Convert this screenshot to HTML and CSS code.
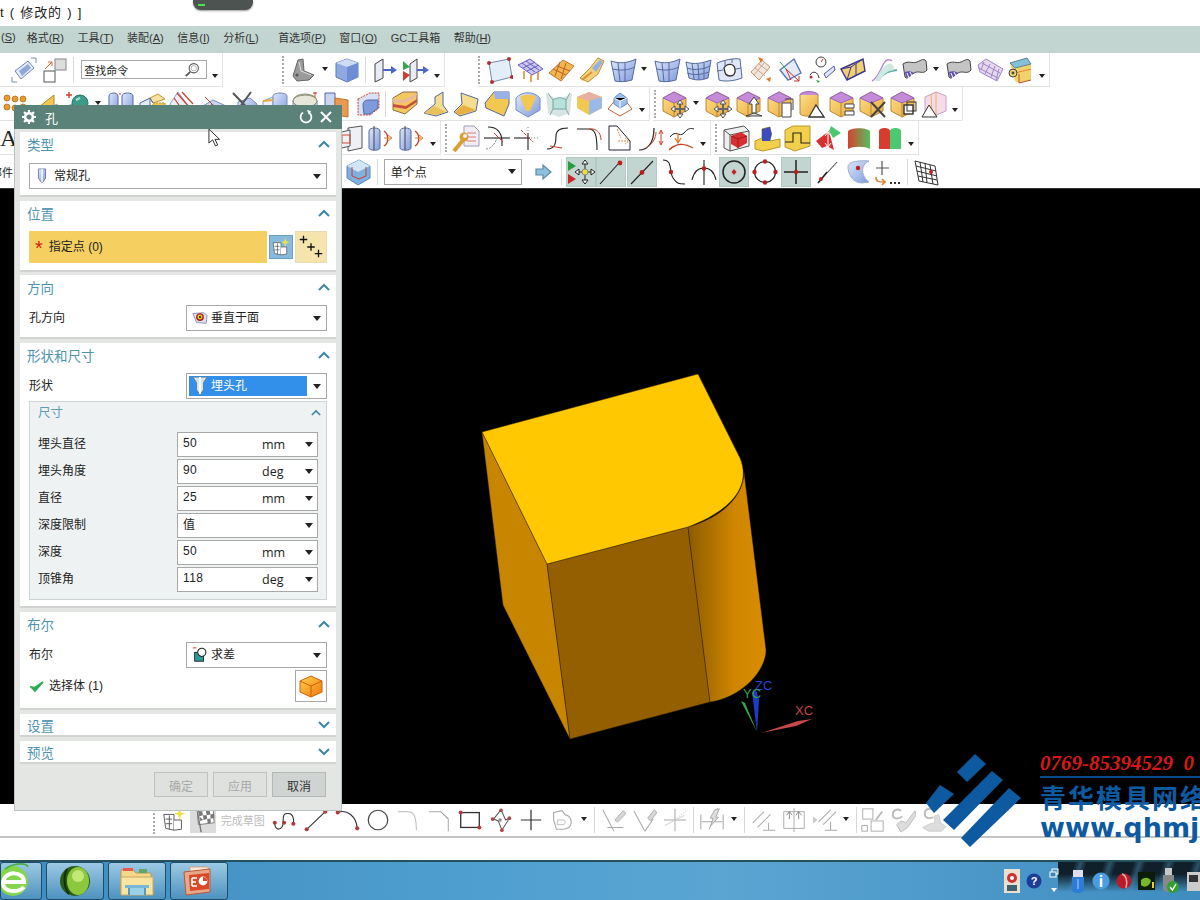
FILE: index.html
```html
<!DOCTYPE html>
<html lang="zh">
<head>
    <meta charset="UTF-8">
    <title>孔</title>
    <link rel="stylesheet" href="styles.css">
</head>
<body>
<svg class="defs" width="0" height="0">
    <defs>
        <linearGradient id="ye" x1="0" x2="1" y1="0" y2="1"><stop offset="0" stop-color="#fbe08a"/><stop offset="1" stop-color="#eda93c"/></linearGradient>
        <linearGradient id="bl" x1="0" x2="1" y1="0" y2="1"><stop offset="0" stop-color="#dfe8fb"/><stop offset="1" stop-color="#7f9bdc"/></linearGradient>
        <linearGradient id="rg" x1="0" x2="1"><stop offset="0" stop-color="#d8402c"/><stop offset="1" stop-color="#52c060"/></linearGradient>
        <linearGradient id="side" x1="0" x2="1"><stop offset="0" stop-color="#8c5c00"/><stop offset=".6" stop-color="#d08600"/><stop offset="1" stop-color="#d88c00"/></linearGradient>
        <linearGradient id="box" x1="0" x2="1" y1="0" y2="1"><stop offset="0" stop-color="#ffd24a"/><stop offset="1" stop-color="#f07810"/></linearGradient>

        <!-- row 1 -->
        <symbol id="rotview" viewBox="0 0 28 28"><path d="M5 15 18 5 24 12 11 23Z" fill="#e4eaf8" stroke="#6f86c0"/><path d="M9 15 18 8 21 12 12 20Z" fill="#8ea8dc"/><path d="M2 21v5h5M26 2h-5M26 2v5" stroke="#7d8cb4" fill="none"/></symbol>
        <symbol id="twosq" viewBox="0 0 28 28"><rect x="14" y="3" width="11" height="11" fill="#ddd" stroke="#888"/><rect x="3" y="15" width="11" height="11" fill="#fff" stroke="#555"/><path d="M4 13 11 6M11 6H7M11 6v4" stroke="#d9622c" fill="none"/></symbol>
        <symbol id="bracket" viewBox="0 0 28 28"><path d="M4 20 9 4 14 3 15 15 25 19 20 24 8 25Z" fill="#9b9b9b" stroke="#666"/><path d="M10 6 12 15 22 19" fill="none" stroke="#e0e0e0"/><circle cx="8" cy="19" r="1.6" fill="#555"/></symbol>
        <symbol id="cubeb" viewBox="0 0 28 28"><path d="M14 3 25 7V21L14 26 3 21V7Z" fill="#8ea9e2" stroke="#6378b4"/><path d="M3 7 14 11 25 7 14 3Z" fill="#cfdcf6"/><path d="M14 11V26L25 21V7Z" fill="#6f8dd2"/></symbol>
        <symbol id="extr" viewBox="0 0 28 28"><path d="M4 8 12 3V22L4 26Z" fill="#e8ecf4" stroke="#444"/><path d="M12 14H23" stroke="#4a66c8" stroke-width="2"/><path d="M20 10 26 14 20 18Z" fill="#4a66c8"/></symbol>
        <symbol id="extr2" viewBox="0 0 28 28"><path d="M8 8 15 3V22L8 26Z" fill="#e8ecf4" stroke="#444"/><path d="M1 5 8 11 1 14Z" fill="#3aa655"/><path d="M1 15 8 19 1 25Z" fill="#c9402e"/><path d="M15 14H24" stroke="#4a66c8" stroke-width="2"/><path d="M21 10 27 14 21 18Z" fill="#4a66c8"/></symbol>
        <symbol id="fourpt" viewBox="0 0 28 28"><path d="M4 7 24 3 27 21 7 26Z" fill="#e4eef8" stroke="#6f8ea8"/><g fill="#b03030"><circle cx="4" cy="7" r="2"/><circle cx="24" cy="3" r="2"/><circle cx="27" cy="21" r="2"/><circle cx="7" cy="26" r="2"/></g></symbol>
        <symbol id="gridar" viewBox="0 0 28 28"><path d="M2 9 14 3 27 13 16 19Z" fill="#c9c6f2" stroke="#6a5cc0"/><path d="M6 7 19 16M10 5 23 14M7 12 19 6M11 15 23 9" stroke="#6a5cc0" fill="none"/><path d="M8 15v8M15 19v7M22 16v8" stroke="#e0902c" stroke-width="1.6"/></symbol>
        <symbol id="meshor" viewBox="0 0 28 28"><path d="M2 17 16 4 27 10 14 25Z" fill="#f2b64e" stroke="#b77a28"/><path d="M6 13 19 19M10 10 23 15M13 6 8 20M19 7 14 23" stroke="#c15c2a" fill="none"/></symbol>
        <symbol id="sweep" viewBox="0 0 28 28"><path d="M2 22 12 12 20 2 26 5 20 18 10 26Z" fill="#f1d27a" stroke="#b59238"/><path d="M14 12 22 4 25 6 18 16Z" fill="#92b0e8"/><path d="M4 24 14 16" stroke="#e09030" stroke-width="2"/></symbol>
        <symbol id="surf3" viewBox="0 0 28 28"><path d="M2 5C10 8 19 7 27 3L23 24C16 26 10 26 6 25Z" fill="url(#bl)" stroke="#56699e"/><path d="M9 7 11 26M16 7 16 26M4 13C12 15 20 14 26 11" stroke="#56699e" fill="none"/></symbol>
        <symbol id="surf4" viewBox="0 0 28 28"><path d="M2 6C10 9 19 7 27 4L24 22C16 25 10 24 5 22Z" fill="url(#bl)" stroke="#56699e"/><path d="M8 7 10 23M14 8 15 24M20 7 20 23M3 12C11 15 20 13 26 10M3 17C11 20 20 18 25 16" stroke="#56699e" fill="none"/></symbol>
        <symbol id="surfhole" viewBox="0 0 28 28"><path d="M2 7C10 4 18 2 25 3L27 22C19 25 10 26 4 24Z" fill="#dfe6f8" stroke="#56699e"/><path d="M9 12C12 7 19 7 20 13 21 18 18 20 15 20 11 20 10 18 9 12Z" fill="#fff" stroke="#333" stroke-width="1.4"/><path d="M2 15 8 14M21 13 26 12M10 5V10M17 3V7" stroke="#56699e" fill="none"/></symbol>
        <symbol id="patchor" viewBox="0 0 28 28"><path d="M5 16 16 4 24 11 13 24Z" fill="#f0e6dc" stroke="#c89070"/><path d="M9 12 19 20M13 8 22 15M8 19 18 7" stroke="#c8a890" fill="none"/><path d="M12 1 17 3 15 7ZM20 23 25 21 24 26Z" fill="#e07828"/></symbol>
        <symbol id="frame" viewBox="0 0 28 28"><path d="M3 14 17 3 24 17 11 24Z" fill="#e4ebf8" stroke="#5a78b8" stroke-width="1.4"/><path d="M9 13 22 25M22 25H17M22 25V20M9 13 14 24" stroke="#c03428" fill="none"/><path d="M9 13 3 6" stroke="#3aa655"/></symbol>
        <symbol id="gauge" viewBox="0 0 28 28"><circle cx="13" cy="6" r="5" fill="#fff" stroke="#444"/><path d="M13 6 15 3" stroke="#c03428"/><path d="M16 18 26 10 27 14 18 22Z" fill="#dfe6f8" stroke="#5a58b0"/><path d="M2 19C5 14 10 16 11 22" fill="none" stroke="#333"/><circle cx="3" cy="21" r="1.5" fill="#b03030"/><path d="M8 24 12 25 10 27Z" fill="#3a9a55"/></symbol>
        <symbol id="wedge" viewBox="0 0 28 28"><path d="M2 13 24 3 26 15 8 24Z" fill="#f2ce74" stroke="#3b3890" stroke-width="1.4"/><path d="M2 13 12 11 24 3M12 11 8 24M17 8 17 19" stroke="#3b3890" fill="none"/></symbol>
        <symbol id="curves" viewBox="0 0 28 28"><path d="M2 25C8 22 10 14 14 7 16 3 20 3 22 5" fill="none" stroke="#b88ac8" stroke-width="1.5"/><path d="M8 24C14 16 20 15 27 14" fill="none" stroke="#5cb4a8" stroke-width="2"/><path d="M5 25C9 17 12 11 18 8 22 6 25 12 24 14 18 15 14 17 10 25Z" fill="#cfe8e4"/></symbol>
        <symbol id="cloth" viewBox="0 0 28 28"><path d="M2 8C8 4 11 8 16 6S22 2 25 5L26 14C22 19 18 14 13 17S7 24 4 21Z" fill="#c4c4c4" stroke="#444"/><path d="M5 21C9 22 11 18 13 17 10 15 7 15 4 16Z" fill="#5e52b4"/><path d="M6 17 8 22M9 16 11 20" stroke="#fff"/></symbol>
        <symbol id="pinkgrid" viewBox="0 0 28 28"><path d="M2 9 10 3 27 13 21 25 4 16Z" fill="#e8d8ee" stroke="#9a86c8"/><path d="M8 6 5 14M14 8 9 18M19 10 15 21M23 13 20 24M3 12 22 22M6 7 24 17" stroke="#9a86c8" fill="none"/></symbol>
        <symbol id="roll" viewBox="0 0 28 28"><path d="M3 7 20 2 24 8 24 24 12 27 8 25Z" fill="#f2d26a"/><path d="M3 7 20 2 24 8 8 12Z" fill="#86c0d4" stroke="#5a8498"/><path d="M8 17 24 13" stroke="#e8803c"/><path d="M12 18V27L24 24" stroke="#c04a30" fill="none"/><circle cx="6" cy="17" r="4" fill="#f2d26a" stroke="#444"/><circle cx="6" cy="17" r="1.4" fill="#444"/></symbol>

        <!-- row 2 -->
        <symbol id="dots" viewBox="0 0 28 28"><g fill="#e89a2c" stroke="#a86414" stroke-width=".7"><circle cx="6" cy="8" r="3"/><circle cx="14" cy="9" r="3"/><circle cx="22" cy="9" r="3"/><circle cx="6" cy="17" r="3"/><circle cx="14" cy="18" r="3"/><circle cx="22" cy="17" r="3"/></g></symbol>
        <symbol id="plane" viewBox="0 0 28 28"><path d="M3 20 22 5V19L7 26Z" fill="#f2c850" stroke="#b08828"/><path d="M14 20 25 14 27 24 16 26Z" fill="#d8e2f6" stroke="#8a9ccc"/></symbol>
        <symbol id="spherep" viewBox="0 0 28 28"><path d="M3 5H9M6 2V8" stroke="#c8402c" stroke-width="1.4"/><rect x="7" y="15" width="8" height="11" fill="#3d9c88" stroke="#276"/><circle cx="17" cy="13" r="8" fill="#3d9c88" stroke="#276"/><path d="M13 10 17 8" stroke="#a8e0d0" stroke-width="2"/></symbol>
        <symbol id="cyl2" viewBox="0 0 28 28"><path d="M2 6C2 2 11 2 11 6V24C11 27 2 27 2 24Z" fill="url(#bl)" stroke="#56699e"/><path d="M15 6C15 2 26 2 26 6V24C26 27 15 27 15 24Z" fill="url(#bl)" stroke="#56699e"/><path d="M12 4H14M12 25H14" stroke="#c8402c"/></symbol>
        <symbol id="boxy" viewBox="0 0 28 28"><path d="M2 13 12 8V25L2 26Z" fill="#e4ebf8" stroke="#56699e"/><path d="M12 8 20 4 27 9 15 13Z" fill="#f6e2a0" stroke="#c8922c"/><path d="M15 13H27V25H15Z" fill="#f2c850" stroke="#c8922c" stroke-dasharray="2 1"/><path d="M12 8 15 13" stroke="#56699e"/></symbol>
        <symbol id="redplate" viewBox="0 0 28 28"><path d="M2 14 10 2 26 24 8 26Z" fill="#eceef6" stroke="#8a9ccc"/><path d="M9 3 22 18M14 2 25 14M6 8 16 22" stroke="#c8402c" stroke-width="1.2"/></symbol>
        <symbol id="redplate2" viewBox="0 0 28 28"><path d="M2 17 14 10 27 16 15 25Z" fill="#c8d6f2" stroke="#7a8cbc"/><path d="M6 7 24 25" stroke="#c8402c"/><path d="M12 14 20 18" stroke="#c8402c"/></symbol>
        <symbol id="xblue" viewBox="0 0 28 28"><path d="M8 12 20 8 27 14V23L15 26 8 20Z" fill="url(#bl)" stroke="#7a8cbc"/><path d="M3 3 24 25M21 2 4 25" stroke="#555" stroke-width="2"/></symbol>
        <symbol id="cubecyl" viewBox="0 0 28 28"><path d="M2 11 12 7V23L2 26Z" fill="#eef0f6" stroke="#8a9ccc"/><path d="M12 6C12 2 26 2 26 6V22C26 26 12 26 12 22Z" fill="url(#bl)" stroke="#7a8cbc"/><path d="M12 10 2 11" stroke="#e8a83c" stroke-width="2"/></symbol>
        <symbol id="ellip" viewBox="0 0 28 28"><ellipse cx="14" cy="11" rx="12" ry="7" fill="#e8e4d0" stroke="#8a8a70"/><path d="M2 11V22H26V11" fill="#c8d6f2" stroke="#7a8cbc"/><ellipse cx="14" cy="11" rx="12" ry="6" fill="#e8e6d8" stroke="#8a8a70"/><path d="M24 2V7M22 3H26" stroke="#c8402c"/></symbol>
        <symbol id="foldor" viewBox="0 0 28 28"><path d="M3 3H13V24H3Z" fill="#c8d6f2" stroke="#56699e"/><path d="M13 8 26 10V27L13 25Z" fill="#e89a50" stroke="#c47428"/></symbol>
        <symbol id="dashbox" viewBox="0 0 28 28"><path d="M5 9 17 3H26V18L17 25H5Z" fill="#d8e2f6" stroke="#c8402c" stroke-dasharray="2 1"/><path d="M10 16C10 10 13 10 18 10H25V18L17 24H11Z" fill="#7f9bdc" stroke="#56699e"/></symbol>
        <symbol id="band" viewBox="0 0 28 28"><path d="M2 8 12 2H26V14L14 24 2 20Z" fill="#f4c860" stroke="#8a6c48"/><path d="M2 8C8 11 12 10 15 9 21 7 24 4 26 3 26 8 18 11 15 12 9 13 4 13 2 12Z" fill="#e8b8a0"/><path d="M2 14 15 16 26 9V12L15 19 2 17Z" fill="#c8503c"/></symbol>
        <symbol id="flap" viewBox="0 0 28 28"><path d="M2 23 13 14V7L21 2V15L26 22 14 26Z" fill="#f4dc90" stroke="#56699e"/><path d="M2 23 12 16 24 22 14 25Z" fill="#e8c05c"/></symbol>
        <symbol id="flap2" viewBox="0 0 28 28"><path d="M9 3 26 9 24 21 8 26 2 22 10 14Z" fill="#f4dc90" stroke="#56699e"/><path d="M3 22 11 15 24 20 8 25Z" fill="#e8b040"/></symbol>
        <symbol id="sheet" viewBox="0 0 28 28"><path d="M2 13 11 2H26V14L21 26 3 18Z" fill="#f2c850" stroke="#56699e"/><path d="M11 2H26V9H12Z" fill="#9ab0e6"/></symbol>
        <symbol id="cone" viewBox="0 0 28 28"><path d="M2 8C8 1 20 1 26 8V20L14 27 2 20Z" fill="url(#bl)" stroke="#7a8cbc"/><path d="M6 7C10 4 18 4 22 7L16 21H12Z" fill="#f2c850"/></symbol>
        <symbol id="fillet" viewBox="0 0 28 28"><path d="M1 3 13 10 27 3 25 23 14 27 3 23Z" fill="#d6e4e4"/><path d="M8 10C12 7 18 7 21 10V19H8Z" fill="#b8e0dc" stroke="#6ca8a4"/><path d="M3 3 8 10M25 3 21 10M8 19 5 25M21 19 24 25" stroke="#8aa4a4"/></symbol>
        <symbol id="chamf" viewBox="0 0 28 28"><path d="M2 7 14 2 27 7V18L14 25 2 18Z" fill="#f2c850"/><path d="M2 7 14 2 27 7 14 11Z" fill="#e8b0a0"/><path d="M14 11V25L27 18V7Z" fill="#9ab8e8"/></symbol>
        <symbol id="pyr" viewBox="0 0 28 28"><path d="M2 19 14 4 26 19 14 26Z" fill="#fff" stroke="#d0603c"/><path d="M14 3 21 8V14L14 18 8 14V8Z" fill="#9ac0ec" stroke="#6888c0"/><path d="M8 8 14 11 21 8M14 11V18" stroke="#fff"/></symbol>
        <symbol id="pbox" viewBox="0 0 28 28"><path d="M2 8 13 2 25 8V21L13 27 2 21Z" fill="url(#ye)" stroke="#b88838"/><path d="M2 8 13 2 25 8 13 13Z" fill="#c48cd8" stroke="#9a64b8"/><path d="M13 13V27" stroke="#b88838"/></symbol>
        <symbol id="pmove" viewBox="0 0 28 28"><use href="#pbox"/><path d="M19 11V27M11 19H27" stroke="#666" stroke-width="2"/><path d="M16 14 19 10 22 14ZM16 24 19 28 22 24ZM14 16 10 19 14 22ZM24 16 28 19 24 22Z" fill="#fff" stroke="#555"/></symbol>
        <symbol id="pup" viewBox="0 0 28 28"><use href="#pbox"/><path d="M19 7 14 14H17V23H21V14H24Z" fill="#fff" stroke="#444"/><path d="M11 26H27L19 23Z" fill="#ddd" stroke="#444"/></symbol>
        <symbol id="pdoc" viewBox="0 0 28 28"><use href="#pbox"/><path d="M16 13H25V27H16Z" fill="#fff" stroke="#444"/><path d="M19 9H27V20" fill="none" stroke="#444"/></symbol>
        <symbol id="pcyl" viewBox="0 0 28 28"><ellipse cx="12" cy="5" rx="9" ry="3.4" fill="#c48cd8" stroke="#9a64b8"/><path d="M3 5V24C6 27 18 27 21 24V5" fill="url(#ye)" stroke="#b88838"/><path d="M19 15 27 27H12Z" fill="#fff" stroke="#333" stroke-width="1.3"/></symbol>
        <symbol id="pswap" viewBox="0 0 28 28"><use href="#pbox"/><path d="M17 14H26V18H17ZM17 21H26V25H17Z" fill="#fff" stroke="#444"/></symbol>
        <symbol id="px" viewBox="0 0 28 28"><use href="#pbox"/><path d="M13 12 27 27M27 12 13 27" stroke="#444" stroke-width="2"/></symbol>
        <symbol id="psq" viewBox="0 0 28 28"><use href="#pbox"/><rect x="15" y="15" width="9" height="9" fill="#fff" stroke="#333" stroke-width="1.4"/><rect x="18" y="12" width="9" height="9" fill="none" stroke="#333"/></symbol>
        <symbol id="ptri" viewBox="0 0 28 28"><path d="M5 7 16 2 26 6V21L14 26 5 22Z" fill="#f4dce8" stroke="#c8a0c8"/><path d="M16 2V26M11 4 12 24" stroke="#f0b060"/><path d="M9 15 17 27H2Z" fill="#fff" stroke="#333"/></symbol>

        <!-- row 3 -->
        <symbol id="cubes2" viewBox="0 0 28 28"><path d="M12 4 26 2V24L12 27Z" fill="#eef0f6" stroke="#555"/><path d="M2 9 14 6V22L2 25Z" fill="#eef0f6" stroke="#555"/><rect x="6" y="11" width="8" height="8" fill="none" stroke="#c8502c"/></symbol>
        <symbol id="cylar" viewBox="0 0 28 28"><path d="M2 7C2 3 13 3 13 7V24C13 27 2 27 2 24Z" fill="url(#bl)" stroke="#56699e"/><path d="M7 2V26" stroke="#444"/><path d="M17 7C22 10 22 19 17 22" stroke="#c8402c" fill="none" stroke-width="1.4"/><path d="M17 14H24M21 11 25 14 21 17" stroke="#e08030" fill="none"/></symbol>
        <symbol id="wrench" viewBox="0 0 28 28"><path d="M12 2H22L27 7V22H12Z" fill="#f0eef4" stroke="#a098b8"/><path d="M15 9H24M15 13H24M15 17H24" stroke="#d88070"/><path d="M2 27 12 15" stroke="#d8a030" stroke-width="4"/><circle cx="12" cy="13" r="4.5" fill="#d8a030"/><circle cx="13" cy="12" r="2" fill="#f0eef4"/></symbol>
        <symbol id="cur1" viewBox="0 0 28 28"><path d="M1 14H27" stroke="#222" stroke-width="1.1"/><path d="M5 3C14 3 20 8 19 22" stroke="#222" fill="none" stroke-width="1.1"/><path d="M3 25C8 25 12 20 14 14" stroke="#888" fill="none" stroke-dasharray="2 1"/><path d="M11 9 20 18" stroke="#c8402c"/></symbol>
        <symbol id="cur2" viewBox="0 0 28 28"><path d="M1 14H17" stroke="#222" stroke-width="1.1"/><path d="M15 26V9" stroke="#222" stroke-width="1.1"/><path d="M8 6 20 18" stroke="#c8402c" stroke-dasharray="3 1"/><path d="M18 14H26M15 3V7" stroke="#888" stroke-dasharray="1 2"/></symbol>
        <symbol id="cur3" viewBox="0 0 28 28"><path d="M3 25C12 25 12 17 12 12S15 4 24 4" stroke="#222" fill="none" stroke-width="1.1"/><path d="M6 22 18 24" stroke="#c8402c" stroke-width="1.2"/></symbol>
        <symbol id="cur4" viewBox="0 0 28 28"><path d="M2 5H14C20 5 22 11 22 26" stroke="#222" fill="none" stroke-width="1.1"/><path d="M14 5H18C23 6 26 10 26 16" stroke="#c8402c" fill="none"/></symbol>
        <symbol id="docar" viewBox="0 0 28 28"><path d="M3 2H11L24 17V26H3Z" fill="#fff" stroke="#223"/><path d="M12 17H22M19 14 23 17 19 20M11 5 15 14" stroke="#d8904c" fill="none" stroke-dasharray="2 1"/></symbol>
        <symbol id="curar" viewBox="0 0 28 28"><path d="M2 26C10 26 17 20 17 4" stroke="#222" fill="none" stroke-width="1.2"/><path d="M9 24C15 21 19 14 19 8" stroke="#c8402c" fill="none"/><path d="M24 7V20M22 10 24 6 26 10M22 17 24 21 26 17" stroke="#c8402c" fill="none"/></symbol>
        <symbol id="curdown" viewBox="0 0 28 28"><path d="M3 13C9 5 12 14 17 9 21 4 24 4 27 5" stroke="#222" fill="none"/><path d="M2 26C9 19 18 19 26 24" stroke="#c8402c" fill="none" stroke-width="1.3"/><path d="M11 9V18M8 14 11 19 14 14" stroke="#e08030" fill="none" stroke-width="1.4"/></symbol>
        <symbol id="redcube" viewBox="0 0 28 28"><path d="M2 6 22 2 27 7V22L8 27 2 24Z" fill="#eee" stroke="#555"/><path d="M2 6 8 11 27 7M8 11V27" stroke="#555" fill="none"/><path d="M9 12 19 8 25 12V19L16 24 9 20Z" fill="#d83030"/><path d="M9 12 16 15 25 12M16 15V24" stroke="#a01818" fill="none"/></symbol>
        <symbol id="step1" viewBox="0 0 28 28"><path d="M2 17 9 14V5L17 3V17L27 15V23L10 27 2 25Z" fill="#f2d04c" stroke="#b89828"/><path d="M9 5 17 3 19 10 17 17 9 17Z" fill="#3c4cb8"/></symbol>
        <symbol id="step2" viewBox="0 0 28 28"><path d="M2 6 10 2H27V22L12 27 2 23Z" fill="#f2d04c" stroke="#b89828"/><path d="M2 18H10V9H18V19H27" fill="none" stroke="#222" stroke-width="1.1"/></symbol>
        <symbol id="grred" viewBox="0 0 28 28"><path d="M2 17 15 7 20 26 13 22 8 24Z" fill="#d83030"/><path d="M15 7 17 2 27 9 19 14Z" fill="#4cc870"/><path d="M14 9 14 22M11 12 14 8 17 12M11 19 14 23 17 19" stroke="#fff" fill="none"/></symbol>
        <symbol id="rggrad" viewBox="0 0 28 28"><path d="M3 8C3 3 25 3 25 8V25C20 22 8 22 3 25Z" fill="url(#rg)"/></symbol>
        <symbol id="rgsplit" viewBox="0 0 28 28"><path d="M3 7C3 3 14 3 14 7V25H3Z" fill="#d83c30"/><path d="M14 7C14 3 25 3 25 7V25H14Z" fill="#4cc870"/></symbol>

        <!-- row 4 -->
        <symbol id="cubered" viewBox="0 0 28 28"><path d="M3 8 15 2 26 8V20L14 27 3 20Z" fill="#7fb0e0" stroke="#5c88b8"/><path d="M3 8 15 2 26 8 14 14Z" fill="#cfe6f6"/><path d="M8 9V18L15 21 22 18V9" fill="none" stroke="#c8402c"/></symbol>
        <symbol id="nextar" viewBox="0 0 28 28"><path d="M7 11H14V7L22 14 14 21V17H7Z" fill="#8ec0dc" stroke="#5c8ca4" stroke-width="1.2"/></symbol>
        <symbol id="snapall" viewBox="0 0 28 28"><path d="M1 3 9 8 1 13Z" fill="#2a9c40"/><path d="M1 16 9 21 1 26Z" fill="#c82828"/><path d="M18 2 21 6H15ZM18 26 21 22H15ZM8 14 12 11V17ZM28 14 24 11V17Z" fill="#fff" stroke="#222"/><path d="M18 6V22M12 14H24" stroke="#222"/><circle cx="18" cy="14" r="3" fill="#f0e030" stroke="#888"/></symbol>
        <symbol id="snapend" viewBox="0 0 28 28"><path d="M3 26 22 5" stroke="#222" stroke-width="1.1"/><circle cx="23" cy="5" r="2.4" fill="#b82020"/></symbol>
        <symbol id="snapmid" viewBox="0 0 28 28"><path d="M3 26 25 3" stroke="#222" stroke-width="1.1"/><circle cx="14" cy="14.5" r="2.4" fill="#b82020"/></symbol>
        <symbol id="snapctl" viewBox="0 0 28 28"><path d="M4 2C14 2 10 14 14 20S20 26 26 26" stroke="#222" fill="none" stroke-width="1.1"/><circle cx="12" cy="14" r="2.2" fill="#b82020"/></symbol>
        <symbol id="snapint" viewBox="0 0 28 28"><path d="M14 2V27" stroke="#222" stroke-width="1.1"/><path d="M2 22C4 13 9 10 14 10S24 13 26 22" stroke="#222" fill="none" stroke-width="1.1"/><circle cx="14" cy="10.5" r="2.2" fill="#b82020"/></symbol>
        <symbol id="snapcen" viewBox="0 0 28 28"><circle cx="14" cy="14" r="11" fill="none" stroke="#222" stroke-width="1.5"/><path d="M14 11 16.5 14 14 17 11.5 14Z" fill="#c82020"/></symbol>
        <symbol id="snapqua" viewBox="0 0 28 28"><circle cx="14" cy="14" r="10.5" fill="none" stroke="#222" stroke-width="1.2"/><g fill="#b82020"><circle cx="14" cy="3.5" r="2.2"/><circle cx="14" cy="24.5" r="2.2"/><circle cx="3.5" cy="14" r="2.2"/><circle cx="24.5" cy="14" r="2.2"/></g></symbol>
        <symbol id="snapcross" viewBox="0 0 28 28"><path d="M14 2V26M2 14H26" stroke="#222" stroke-width="1.5"/><circle cx="14" cy="14" r="2.2" fill="#b82020"/></symbol>
        <symbol id="snapline" viewBox="0 0 28 28"><path d="M5 25 24 4" stroke="#555" stroke-width="1.1"/><path d="M5 25 14 14" stroke="#222" stroke-width="1.3"/><circle cx="8" cy="21" r="2" fill="#b82020"/></symbol>
        <symbol id="snapface" viewBox="0 0 28 28"><path d="M4 9C4 5 10 2 25 3 16 7 17 18 25 24L18 25C8 25 4 15 4 9Z" fill="url(#bl)" stroke="#98acd0"/><circle cx="14" cy="10" r="2.2" fill="#b82020"/></symbol>
        <symbol id="snapmore" viewBox="0 0 28 28"><path d="M8 3V17M2 10H15" stroke="#555" stroke-width="1.2"/><path d="M2 19C2 24 5 24 10 24M8 21 11 24 8 27" stroke="#e08030" fill="none" stroke-width="1.6"/><path d="M16 25H18M20 25H22M24 25H26" stroke="#333" stroke-width="2"/></symbol>
        <symbol id="wgrid" viewBox="0 0 28 28"><path d="M3 3 23 8 26 27 7 23Z" fill="#fff" stroke="#333"/><path d="M8 4 11 24M13 5 15 25M18 7 21 26M4 8 24 13M5 13 25 18M6 18 25 22" stroke="#333" fill="none"/><circle cx="19" cy="14" r="2" fill="#c82020"/></symbol>

        <!-- sketch bar -->
        <symbol id="sknew" viewBox="0 0 28 28"><path d="M3 8H14V25L5 23Z" fill="#fff" stroke="#555"/><path d="M5 13H12M5 18H12M9 9V24" stroke="#555"/><path d="M20 1 21.5 6 26 7 21.5 9 20 14 18.5 9 14 7 18.5 6Z" fill="#f0e048"/><path d="M14 14H22V24L14 25" fill="#fff" stroke="#555"/></symbol>
        <symbol id="skflag" viewBox="0 0 28 28"><path d="M8 5 25 2 26 17 9 19Z" fill="#fff" stroke="#777"/><path d="M9 5 13 4.5 14 9 10 10ZM17 4 21 3 22 8 18 9ZM14 9 18 9 18.5 13 14.5 14ZM22 8 26 7 26 12 22 12.5ZM10 10 14 14 11 15ZM18.5 13 22 12.5 22.5 17 19 17.5Z" fill="#777"/><path d="M8 5 12 27" stroke="#777" stroke-width="1.5"/></symbol>
        <symbol id="skspline" viewBox="0 0 28 28"><path d="M3 18C3 26 12 26 12 16S14 7 18 7 24 12 23 18" fill="none" stroke="#333" stroke-width="1.2"/><g fill="#b03a3a"><circle cx="3" cy="17" r="2.2"/><circle cx="13" cy="17" r="2.2"/><circle cx="23" cy="18" r="2.2"/></g></symbol>
        <symbol id="skline" viewBox="0 0 28 28"><path d="M4 24 24 5" stroke="#333" stroke-width="1.2"/><circle cx="4" cy="24" r="2.2" fill="#b03a3a"/><circle cx="24" cy="5" r="2.2" fill="#b03a3a"/></symbol>
        <symbol id="skarc" viewBox="0 0 28 28"><path d="M4 6C14 2 24 10 25 23" fill="none" stroke="#333" stroke-width="1.2"/><circle cx="4" cy="6" r="2.2" fill="#b03a3a"/><circle cx="25" cy="23" r="2.2" fill="#b03a3a"/></symbol>
        <symbol id="skcirc" viewBox="0 0 28 28"><circle cx="14" cy="14" r="10.5" fill="none" stroke="#444" stroke-width="1.3"/></symbol>
        <symbol id="skfil" viewBox="0 0 28 28"><path d="M3 5H14C20 5 23 10 23 25" fill="none" stroke="#bbb" stroke-width="1.1"/></symbol>
        <symbol id="skcham" viewBox="0 0 28 28"><path d="M3 5H16L24 13V26" fill="none" stroke="#aaa" stroke-width="1.1"/><path d="M16 5 24 13" stroke="#888" stroke-dasharray="1 1"/></symbol>
        <symbol id="skrect" viewBox="0 0 28 28"><rect x="4" y="6" width="20" height="16" fill="none" stroke="#333" stroke-width="1.4"/><circle cx="4" cy="6" r="2.2" fill="#b03a3a"/><circle cx="24" cy="22" r="2.2" fill="#b03a3a"/></symbol>
        <symbol id="skpoly" viewBox="0 0 28 28"><path d="M6 13 14 3 19 14 23 12 15 25 11 15Z" fill="none" stroke="#555" stroke-width="1.1"/><g fill="#a84848"><circle cx="14" cy="3.5" r="2"/><circle cx="5" cy="13" r="2"/><circle cx="23" cy="12" r="2"/><circle cx="15" cy="25" r="2"/></g><circle cx="13" cy="14" r="1.8" fill="#888"/></symbol>
        <symbol id="skplus" viewBox="0 0 28 28"><path d="M14 3V25M3 14H25" stroke="#333" stroke-width="1.3"/></symbol>
        <symbol id="skprof" viewBox="0 0 28 28"><path d="M5 6 14 4 18 9C20 8 24 12 24 16 24 22 20 24 14 24H8L5 14Z" fill="none" stroke="#aaa" stroke-width="1.2"/><path d="M9 14H15C18 14 19 18 15 19H9Z" fill="none" stroke="#bbb"/></symbol>
        <symbol id="gtrim" viewBox="0 0 28 28"><path d="M3 3 15 26M8 22H25" stroke="#aaa" stroke-width="1.1"/><path d="M16 14 25 4 28 7 19 16Z" fill="#d8d8d8" stroke="#aaa"/></symbol>
        <symbol id="gtrim2" viewBox="0 0 28 28"><path d="M3 4 15 26M15 26 24 13" stroke="#aaa" stroke-width="1.1"/><path d="M18 12 25 3 28 6 21 15Z" fill="#d8d8d8" stroke="#aaa"/></symbol>
        <symbol id="gcross" viewBox="0 0 28 28"><path d="M14 2V26M2 14H26" stroke="#aaa" stroke-width="1.1"/><path d="M16 12 26 4" stroke="#bbb" stroke-dasharray="1 2"/><path d="M3 20 24 9" stroke="#ccc"/></symbol>
        <symbol id="gdim" viewBox="0 0 28 28"><path d="M2 8V24M26 8V24M3 16H25M20 1 11 24" stroke="#aaa" fill="none" stroke-width="1.1"/><path d="M17 3 22 2 18 11 21 11 13 20 15 12 12 12Z" fill="#ddd" stroke="#aaa"/></symbol>
        <symbol id="gpara" viewBox="0 0 28 28"><path d="M3 17 15 5M8 22 22 8M14 25H27M20 17V25" stroke="#aaa" fill="none" stroke-width="1.1"/></symbol>
        <symbol id="gsym" viewBox="0 0 28 28"><rect x="3" y="5" width="22" height="18" fill="none" stroke="#aaa"/><path d="M14 1V27" stroke="#aaa"/><path d="M9 13V5M6 9 9 5 12 9M19 13V5M16 9 19 5 22 9" stroke="#888" fill="none"/></symbol>
        <symbol id="gperp" viewBox="0 0 28 28"><path d="M1 10 6 14 1 18Z" fill="#ccc"/><path d="M7 16 20 3M12 19 26 5M14 25H27M20 16V25" stroke="#aaa" fill="none" stroke-width="1.1"/></symbol>
        <symbol id="gshow" viewBox="0 0 28 28"><rect x="4" y="2" width="11" height="11" fill="#fff" stroke="#aaa"/><rect x="13" y="15" width="13" height="11" fill="#fff" stroke="#aaa"/><rect x="3" y="20" width="6" height="6" fill="#fff" stroke="#aaa"/><path d="M18 14 25 5" stroke="#bbb" stroke-width="2"/></symbol>
        <symbol id="gcap1" viewBox="0 0 28 28"><path d="M12 4C7 1 3 4 3 8 3 14 10 13 13 10" fill="none" stroke="#bbb" stroke-width="2"/><path d="M7 19 12 15 17 17 27 4 28 9 19 22 12 27Z" fill="#ddd" stroke="#bbb"/></symbol>
        <symbol id="gcap2" viewBox="0 0 28 28"><path d="M12 3C7 0 4 4 4 7 4 12 9 13 13 11" fill="none" stroke="#bbb" stroke-width="2"/><path d="M14 10 19 8 21 17 27 21 22 26H8L2 22 10 18 15 17Z" fill="#ddd" stroke="#ccc"/></symbol>

        <!-- small inline icons -->
        <symbol id="holeg" viewBox="0 0 14 22"><path d="M2 1H12V14L7 21 2 14Z" fill="url(#bl)" stroke="#4c5c84"/><path d="M7 1V20" stroke="#fff" stroke-width="2"/></symbol>
        <symbol id="csk" viewBox="0 0 18 22"><path d="M1 1H17L13 7V15L9 21 5 15V7Z" fill="#d4e4ec" stroke="#607888"/><path d="M9 1V20" stroke="#fff" stroke-width="2"/></symbol>
    </defs>
</svg>

<div class="screen">
    <div class="titlebar">t ( 修改的 ) ]</div>
    <div class="menubar">
        <span class="mi first">(<u>S</u>)</span>
        <span class="mi">格式(<u>R</u>)</span>
        <span class="mi">工具(<u>T</u>)</span>
        <span class="mi">装配(<u>A</u>)</span>
        <span class="mi">信息(<u>I</u>)</span>
        <span class="mi">分析(<u>L</u>)</span>
        <span class="mi wide">首选项(<u>P</u>)</span>
        <span class="mi">窗口(<u>O</u>)</span>
        <span class="mi">GC工具箱</span>
        <span class="mi">帮助(<u>H</u>)</span>
    </div>

    <div class="toolrow">
        <div class="tgroup g-view">
            <svg class="ic"><use href="#rotview"/></svg><svg class="ic"><use href="#twosq"/></svg>
            <i class="sep"></i>
            <div class="findbox"><span>查找命令</span>
                <svg class="findicon" viewBox="0 0 18 18"><circle cx="11" cy="7" r="5.2" fill="#fff" stroke="#555" stroke-width="1.2"/><circle cx="11" cy="7" r="3" fill="none" stroke="#aaa"/><path d="M7 11 2 16" stroke="#555" stroke-width="2"/></svg>
            </div>
            <i class="dd end"></i>
        </div>
        <div class="tgroup g-feat">
            <i class="grip"></i>
            <svg class="ic"><use href="#bracket"/></svg><i class="dd"></i><svg class="ic"><use href="#cubeb"/></svg>
            <i class="sep"></i>
            <svg class="ic"><use href="#extr"/></svg><svg class="ic"><use href="#extr2"/></svg><i class="dd end"></i>
        </div>
        <div class="tgroup g-surf">
            <i class="grip"></i>
            <svg class="ic"><use href="#fourpt"/></svg><svg class="ic"><use href="#gridar"/></svg><svg class="ic"><use href="#meshor"/></svg><svg class="ic"><use href="#sweep"/></svg><svg class="ic"><use href="#surf3"/></svg><i class="dd"></i><svg class="ic"><use href="#surf3"/></svg><svg class="ic"><use href="#surf4"/></svg><svg class="ic"><use href="#surfhole"/></svg><svg class="ic"><use href="#patchor"/></svg><svg class="ic"><use href="#frame"/></svg><svg class="ic"><use href="#gauge"/></svg><svg class="ic"><use href="#wedge"/></svg><svg class="ic"><use href="#curves"/></svg><svg class="ic"><use href="#cloth"/></svg><i class="dd"></i><svg class="ic"><use href="#cloth"/></svg><svg class="ic"><use href="#pinkgrid"/></svg><svg class="ic"><use href="#roll"/></svg><i class="dd end"></i>
        </div>
    </div>

    <div class="toolrow">
        <div class="tgroup">
            <svg class="ic"><use href="#dots"/></svg><svg class="ic"><use href="#plane"/></svg><svg class="ic"><use href="#spherep"/></svg><i class="dd"></i><svg class="ic"><use href="#cyl2"/></svg><svg class="ic"><use href="#boxy"/></svg><svg class="ic"><use href="#redplate"/></svg><svg class="ic"><use href="#redplate2"/></svg><svg class="ic"><use href="#xblue"/></svg><svg class="ic"><use href="#cubecyl"/></svg><svg class="ic"><use href="#ellip"/></svg><svg class="ic"><use href="#foldor"/></svg><svg class="ic"><use href="#dashbox"/></svg>
            <i class="sep"></i>
            <svg class="ic"><use href="#band"/></svg><svg class="ic"><use href="#flap"/></svg><svg class="ic"><use href="#flap2"/></svg><svg class="ic"><use href="#sheet"/></svg><svg class="ic"><use href="#cone"/></svg><svg class="ic"><use href="#fillet"/></svg><svg class="ic"><use href="#chamf"/></svg><svg class="ic"><use href="#pyr"/></svg><i class="dd end"></i>
        </div>
        <div class="tgroup g-near">
            <i class="grip"></i>
            <svg class="ic"><use href="#pmove"/></svg><i class="dd"></i><svg class="ic"><use href="#pmove"/></svg><svg class="ic"><use href="#pup"/></svg><svg class="ic"><use href="#pdoc"/></svg><svg class="ic"><use href="#pcyl"/></svg><svg class="ic"><use href="#pswap"/></svg><svg class="ic"><use href="#px"/></svg><svg class="ic"><use href="#psq"/></svg><svg class="ic"><use href="#ptri"/></svg><i class="dd end"></i>
        </div>
    </div>

    <div class="toolrow">
        <div class="tgroup">
            <span class="bigA">A</span>
            <svg class="ic"><use href="#cubes2"/></svg><svg class="ic"><use href="#cylar"/></svg><svg class="ic"><use href="#cylar"/></svg><i class="dd end"></i>
        </div>
        <div class="tgroup g-near">
            <i class="grip"></i>
            <svg class="ic"><use href="#wrench"/></svg><svg class="ic"><use href="#cur1"/></svg><svg class="ic"><use href="#cur2"/></svg><svg class="ic"><use href="#cur3"/></svg><svg class="ic"><use href="#cur4"/></svg><svg class="ic"><use href="#docar"/></svg><svg class="ic"><use href="#curar"/></svg><svg class="ic"><use href="#curdown"/></svg><i class="dd end"></i>
        </div>
        <div class="tgroup g-near">
            <i class="grip"></i>
            <svg class="ic"><use href="#redcube"/></svg><svg class="ic"><use href="#step1"/></svg><svg class="ic"><use href="#step2"/></svg><svg class="ic"><use href="#grred"/></svg><svg class="ic"><use href="#rggrad"/></svg><svg class="ic"><use href="#rgsplit"/></svg><i class="dd end"></i>
        </div>
    </div>

    <div class="toolrow last">
        <span class="cutlabel">部件</span>
        <svg class="ic"><use href="#cubered"/></svg>
        <i class="sep"></i>
        <div class="combo pointcombo"><span>单个点</span><i class="arrow"></i></div>
        <svg class="ic nextbtn"><use href="#nextar"/></svg>
        <i class="sep"></i>
        <svg class="ic on"><use href="#snapall"/></svg><svg class="ic on"><use href="#snapend"/></svg><svg class="ic on"><use href="#snapmid"/></svg><svg class="ic"><use href="#snapctl"/></svg><svg class="ic"><use href="#snapint"/></svg><svg class="ic on"><use href="#snapcen"/></svg><svg class="ic"><use href="#snapqua"/></svg><svg class="ic on"><use href="#snapcross"/></svg><svg class="ic"><use href="#snapline"/></svg><svg class="ic"><use href="#snapface"/></svg><svg class="ic"><use href="#snapmore"/></svg>
        <i class="sep"></i>
        <svg class="ic"><use href="#wgrid"/></svg>
    </div>

    <div class="viewport">
        <svg class="model" viewBox="0 188 1200 616">
            <path d="M482 432 503 605 570 739 547 564Z" fill="#c78500" stroke="#3a2800" stroke-width=".4"/>
            <path d="M547 564 688 527 710 702 570 739Z" fill="#935f00" stroke="#2a1c00" stroke-width=".5"/>
            <path d="M688 527C715 520 744 500 744 472L766 650C766 672 740 698 710 702Z" fill="url(#side)" stroke="#2a1c00" stroke-width=".4"/>
            <path d="M482 432 698 374 740 458C750 482 738 508 688 527L547 564Z" fill="#ffc800" stroke="#3a2800" stroke-width=".5"/>
            <path d="M757 732 752 692 756 690 759 700Z" fill="#1c3cc8"/>
            <path d="M757 732 741 701 745 703Z" fill="#38a848"/>
            <path d="M761 733 798 721 812 719 796 726Z" fill="#c84848"/>
            <text class="axis zc" x="755" y="690">ZC</text>
            <text class="axis yc" x="743" y="698">YC</text>
            <text class="axis xc" x="795" y="715">XC</text>
        </svg>
    </div>

    <div class="sketchbar">
        <div class="tgroup g-sketch">
            <i class="grip"></i>
            <svg class="ic"><use href="#sknew"/></svg>
            <svg class="ic flagbtn"><use href="#skflag"/></svg>
            <span class="finish">完成草图</span>
            <svg class="ic"><use href="#skspline"/></svg><svg class="ic"><use href="#skline"/></svg><svg class="ic"><use href="#skarc"/></svg><svg class="ic"><use href="#skcirc"/></svg><svg class="ic"><use href="#skfil"/></svg><svg class="ic"><use href="#skcham"/></svg><svg class="ic"><use href="#skrect"/></svg><svg class="ic"><use href="#skpoly"/></svg><svg class="ic"><use href="#skplus"/></svg><svg class="ic"><use href="#skprof"/></svg><i class="dd"></i>
            <i class="sep slim"></i>
            <svg class="ic"><use href="#gtrim"/></svg><svg class="ic"><use href="#gtrim2"/></svg><svg class="ic"><use href="#gcross"/></svg>
            <i class="sep slim"></i>
            <svg class="ic"><use href="#gdim"/></svg><i class="dd"></i>
            <i class="sep slim"></i>
            <svg class="ic"><use href="#gpara"/></svg><svg class="ic"><use href="#gsym"/></svg><svg class="ic"><use href="#gperp"/></svg><i class="dd"></i>
            <i class="sep slim tail"></i>
            <svg class="ic"><use href="#gshow"/></svg><svg class="ic"><use href="#gcap1"/></svg><svg class="ic"><use href="#gcap2"/></svg>
        </div>
    </div>
    <div class="statusbar"></div>

    <div class="taskbar">
        <div class="taskbtn startbtn">
            <svg viewBox="0 0 40 38" width="40" height="38"><circle cx="12" cy="19" r="15" fill="#84d44e"/><path d="M2 20H23C23 9 4 8 2 20 1 31 18 31 23 25" stroke="#fff" stroke-width="4" fill="none"/><path d="M4 7C14 0 26 1 27 5" stroke="#4cb048" fill="none" stroke-width="1.6"/></svg>
        </div>
        <div class="taskbtn">
            <svg viewBox="0 0 34 34" width="34" height="34"><circle cx="17" cy="17" r="15" fill="#2a5c18"/><ellipse cx="20" cy="17" rx="11" ry="14" fill="#8cc83c"/><ellipse cx="20" cy="12" rx="6" ry="6" fill="#c4e878"/><path d="M9 5C5 12 6 24 11 30" stroke="#123008" stroke-width="2" fill="none"/></svg>
        </div>
        <div class="taskbtn">
            <svg viewBox="0 0 36 34" width="36" height="34"><path d="M2 6H14L17 9H32V28H2Z" fill="#f2d888" stroke="#b89850"/><rect x="4" y="4" width="10" height="3" fill="#e85850"/><rect x="20" y="5" width="8" height="4" fill="#60a860"/><path d="M2 13H34V31H2Z" fill="#f6e4a0" stroke="#c8a860"/><path d="M10 31V22H26V31" fill="#9cd0e8" stroke="#5a98b8" stroke-width="2"/><rect x="6" y="21" width="24" height="3" fill="#78b8d8"/></svg>
        </div>
        <div class="taskbtn">
            <svg viewBox="0 0 34 34" width="34" height="34"><path d="M8 3H26V28H8Z" fill="#fbe8d8" stroke="#d8a080"/><path d="M2 8 28 5V28L4 31Z" fill="#e8a888" stroke="#b85838"/><path d="M7 11 27 9V25L8 27Z" fill="#d84a28"/><path d="M10 14H15M10 18H14M10 22H15M10 14V22" stroke="#fff" stroke-width="1.6"/><circle cx="21" cy="17" r="4.4" fill="#fff"/><path d="M21 17V13A4 4 0 0 1 25 17Z" fill="#d84a28"/></svg>
        </div>
        <div class="tray">
            <svg viewBox="0 0 16 24" width="16" height="24"><rect width="16" height="24" fill="#e8e0d0"/><circle cx="8" cy="9" r="5" fill="#d03030"/><circle cx="8" cy="9" r="2" fill="#fff"/><rect x="3" y="16" width="10" height="6" fill="#406070"/></svg>
            <svg viewBox="0 0 16 20" width="16" height="20"><circle cx="8" cy="10" r="7.5" fill="#1c3c98"/><text x="8" y="14" class="traytext">?</text></svg>
            <svg class="traysmall" viewBox="0 0 12 28" width="12" height="28"><rect x="4" y="2" width="6" height="5" fill="none" stroke="#fff"/><rect x="2" y="5" width="6" height="5" fill="#3a86b8" stroke="#fff"/><path d="M3 21H9L6 25Z" fill="#fff"/></svg>
            <svg class="traygap" viewBox="0 0 16 26" width="16" height="26"><rect x="3" y="2" width="10" height="7" fill="#dde"/><path d="M2 9H14V22C14 26 2 26 2 22Z" fill="#2c7cd8"/><path d="M8 11V21" stroke="#a8d0f8"/></svg>
            <svg viewBox="0 0 18 26" width="18" height="26"><circle cx="9" cy="13" r="8.5" fill="#4c9ce0"/><text x="9" y="19" class="traytext big">i</text></svg>
            <svg viewBox="0 0 16 24" width="16" height="24"><circle cx="8" cy="12" r="7.5" fill="#b81c28"/><path d="M6 5C10 6 12 12 10 19" stroke="#f4a8a8" stroke-width="1.5" fill="none"/></svg>
            <svg viewBox="0 0 18 26" width="18" height="26"><rect y="4" width="17" height="18" fill="#0c1c08"/><path d="M3 12C7 8 12 10 13 13 11 19 6 20 3 17Z" fill="#78b828"/><rect x="14" y="14" width="2" height="6" fill="#f0d020"/></svg>
            <svg viewBox="0 0 18 28" width="18" height="28"><rect x="3" y="1" width="7" height="7" fill="#c8c8c8"/><path d="M1 8H12V22C12 26 1 26 1 22Z" fill="#888"/><circle cx="11" cy="20" r="6" fill="#30a030"/><path d="M8 20 10.5 23 14 17" stroke="#fff" fill="none" stroke-width="1.4"/></svg>
            <svg viewBox="0 0 14 28" width="14" height="28"><rect x="1" y="5" width="13" height="19" fill="#ccc"/><rect x="3" y="8" width="9" height="7" fill="#333"/></svg>
        </div>
    </div>

    <!-- watermark -->
    <svg class="wm-logo" viewBox="0 0 100 100">
        <path d="M50 2 61 12 42 30 32 20Z"/>
        <path d="M15 33 29 42 9 61 1 51Z"/>
        <path d="M67 19 78 28 29 78 18 68Z"/>
        <path d="M84 36 96 46 45 95 36 86Z"/>
    </svg>
    <div class="wm-text">
        <div class="wm-phone">0769-85394529&nbsp;&nbsp;0</div>
        <div class="wm-name">青华模具网络</div>
        <div class="wm-url">www.qhmj</div>
    </div>

    <div class="topnotch"><i></i></div>

    <div class="dialog">
        <div class="dlg-title">
            <svg class="gear" viewBox="0 0 16 16"><circle cx="8" cy="8" r="4.4" fill="none" stroke="#fff" stroke-width="3"/><path d="M8 0V3M8 13V16M0 8H3M13 8H16M2.3 2.3 4.4 4.4M11.6 11.6 13.7 13.7M2.3 13.7 4.4 11.6M11.6 4.4 13.7 2.3" stroke="#fff" stroke-width="2.4"/></svg>
            <span class="dlg-name">孔</span>
            <svg class="dlg-reset" viewBox="0 0 14 14"><path d="M10 2.6A5.4 5.4 0 1 1 4 2.6" fill="none" stroke="#fff" stroke-width="1.8"/><path d="M8 0 12 1 10 5Z" fill="#fff"/></svg>
            <svg class="dlg-close" viewBox="0 0 12 12"><path d="M1 1 11 11M11 1 1 11" stroke="#fff" stroke-width="2"/></svg>
        </div>

        <section class="sec first">
            <div class="sec-h"><span>类型</span><svg class="chev" viewBox="0 0 12 8"><path d="M1 7 6 2 11 7"/></svg></div>
            <div class="sec-b">
                <div class="combo"><svg class="combo-ic" viewBox="0 0 14 22"><use href="#holeg"/></svg><span>常规孔</span><i class="arrow"></i></div>
            </div>
        </section>

        <section class="sec tight">
            <div class="sec-h"><span>位置</span><svg class="chev" viewBox="0 0 12 8"><path d="M1 7 6 2 11 7"/></svg></div>
            <div class="sec-b pick">
                <div class="pickbar"><b class="star">*</b><span>指定点 (0)</span></div>
                <div class="pickbtn blue"><svg viewBox="0 0 28 28" width="20" height="20"><use href="#sknew"/></svg></div>
                <div class="pickbtn pale"><svg viewBox="0 0 32 32" width="30" height="30"><path d="M8 4V12M4 8H12M16 12V20M12 16H20M24 19V27M20 23H28" stroke="#111" stroke-width="1.4"/></svg></div>
            </div>
        </section>

        <section class="sec">
            <div class="sec-h"><span>方向</span><svg class="chev" viewBox="0 0 12 8"><path d="M1 7 6 2 11 7"/></svg></div>
            <div class="sec-b formrow">
                <label>孔方向</label>
                <div class="combo half"><svg class="combo-ic wide" viewBox="0 0 18 14"><path d="M1 2 13 1 17 4 16 13 5 12Z" fill="#dcdff0" stroke="#8a90b4"/><circle cx="9" cy="6" r="3.6" fill="#e8d020" stroke="#b02020" stroke-width="1.6"/><circle cx="9" cy="6" r="1.2" fill="#222"/></svg><span>垂直于面</span><i class="arrow"></i></div>
            </div>
        </section>

        <section class="sec">
            <div class="sec-h"><span>形状和尺寸</span><svg class="chev" viewBox="0 0 12 8"><path d="M1 7 6 2 11 7"/></svg></div>
            <div class="sec-b formrow">
                <label>形状</label>
                <div class="combo half selected"><div class="selbar"><svg class="combo-ic wide" viewBox="0 0 18 22"><use href="#csk"/></svg><span>埋头孔</span></div><i class="arrow"></i></div>
            </div>
            <div class="sizegroup">
                <div class="size-h"><span>尺寸</span><svg class="chev small" viewBox="0 0 12 8"><path d="M1 7 6 2 11 7"/></svg></div>
                <div class="size-row"><label>埋头直径</label><div class="field"><span class="val">50</span><span class="unit">mm</span><i class="arrow"></i></div></div>
                <div class="size-row"><label>埋头角度</label><div class="field"><span class="val">90</span><span class="unit">deg</span><i class="arrow"></i></div></div>
                <div class="size-row"><label>直径</label><div class="field"><span class="val">25</span><span class="unit">mm</span><i class="arrow"></i></div></div>
                <div class="size-row"><label>深度限制</label><div class="field"><span class="val">值</span><span class="unit"></span><i class="arrow"></i></div></div>
                <div class="size-row"><label>深度</label><div class="field"><span class="val">50</span><span class="unit">mm</span><i class="arrow"></i></div></div>
                <div class="size-row"><label>顶锥角</label><div class="field"><span class="val">118</span><span class="unit">deg</span><i class="arrow"></i></div></div>
            </div>
        </section>

        <section class="sec">
            <div class="sec-h"><span>布尔</span><svg class="chev" viewBox="0 0 12 8"><path d="M1 7 6 2 11 7"/></svg></div>
            <div class="sec-b formrow">
                <label>布尔</label>
                <div class="combo half"><svg class="combo-ic wide" viewBox="0 0 18 18"><rect x="3" y="6" width="10" height="10" fill="#2c9c98" stroke="#222"/><circle cx="11" cy="6" r="4.6" fill="#fff" stroke="#222" stroke-width="1.2"/><path d="M1 1H5" stroke="#c82020"/></svg><span>求差</span><i class="arrow"></i></div>
            </div>
            <div class="bodyrow">
                <svg class="check" viewBox="0 0 14 12"><path d="M1 6 5 10 13 1 5 6.5Z" fill="#2cab52" stroke="#2cab52" stroke-width="1.6"/></svg>
                <span class="bodylabel">选择体 (1)</span>
                <div class="bodybtn"><svg viewBox="0 0 24 24" width="24" height="24"><path d="M12 2 23 7V18L12 23 1 18V7Z" fill="url(#box)" stroke="#d06008"/><path d="M1 7 12 12 23 7M12 12V23" stroke="#d06008" fill="none"/></svg></div>
            </div>
        </section>

        <section class="sec closed">
            <div class="sec-h"><span>设置</span><svg class="chev" viewBox="0 0 12 8"><path d="M1 1 6 6 11 1"/></svg></div>
        </section>
        <section class="sec closed">
            <div class="sec-h"><span>预览</span><svg class="chev" viewBox="0 0 12 8"><path d="M1 1 6 6 11 1"/></svg></div>
        </section>

        <div class="dlg-foot">
            <button class="btn off">确定</button>
            <button class="btn off">应用</button>
            <button class="btn">取消</button>
        </div>
    </div>

    <svg class="cursor" viewBox="0 0 14 20"><path d="M1 1V16L5 12.5 8 19 10.5 18 7.5 12H12.5Z" fill="#fff" stroke="#222"/></svg>
</div>
</body>
</html>
```

FILE: styles.css
```css
* {
    box-sizing: border-box;
}
body {
    margin: 0;
    font-family: "Liberation Sans", "Noto Sans CJK SC", sans-serif;
    font-size: 12px;
    color: #222;
    background: #fff;
}
.defs {
    position: absolute;
}
.screen {
    position: relative;
    width: 1200px;
    height: 900px;
    overflow: hidden;
    display: flex;
    flex-direction: column;
    background: #fff;
}

.titlebar {
    height: 26px;
    line-height: 26px;
    font-size: 13px;
    letter-spacing: 0.8px;
    word-spacing: 1px;
    white-space: pre;
    color: #222;
}
.menubar {
    height: 27px;
    padding-bottom: 5px;
    background: #c3d5d1;
    display: flex;
    align-items: center;
    font-size: 11px;
    color: #333;
}
.mi {
    margin-right: 13.5px;
    white-space: nowrap;
}
.mi.first {
    margin-left: 1px;
    margin-right: 11px;
}
.mi.wide {
    margin-left: 6px;
}

.toolrow {
    height: 34px;
    display: flex;
    align-items: stretch;
    background: #fff;
}
.toolrow.last {
    height: 33px;
    align-items: center;
}
.tgroup {
    display: flex;
    align-items: center;
    border-right: 1px solid #e4e4e4;
    border-bottom: 1px solid #e2e2e2;
}
.g-view {
    padding-left: 5px;
}
.g-view .ic:first-child {
    margin-left: 5px;
}
.g-feat {
    margin-left: 58px;
}
.g-surf {
    margin-left: 32px;
}
.g-surf .ic {
    margin: 0 1.5px;
}
.g-near {
    margin-left: 3px;
}
.ic {
    width: 28px;
    height: 28px;
    margin: 0 1.4px;
    flex: none;
}
.ic.on {
    background: #c3d5d1;
    box-shadow: 0 0 0 1px #b2c8c3;
}
.dd {
    position: relative;
    width: 13px;
    height: 100%;
    flex: none;
}
.dd::after {
    content: "";
    position: absolute;
    left: 3px;
    top: 14px;
    border: 3.5px solid transparent;
    border-top: 4px solid #222;
    border-bottom: 0;
}
.dd.end::after {
    top: 21px;
}
.sep {
    width: 1px;
    height: 26px;
    margin: 0 3px;
    background: #d8d8d8;
    flex: none;
}
.grip {
    width: 5.6px;
    height: 28px;
    margin-left: 1px;
    border-left: 2px dotted #aaa;
    flex: none;
}
.findbox {
    width: 126px;
    height: 19px;
    margin-left: 4px;
    margin-right: 2px;
    padding: 0 6px 0 2px;
    display: flex;
    align-items: center;
    justify-content: space-between;
    border: 1px solid #a8a8a8;
    font-size: 11px;
    background: #fff;
}
.findicon {
    width: 16px;
    height: 16px;
}
.bigA {
    width: 334.6px;
    font-family: "Liberation Serif", serif;
    font-size: 24px;
    line-height: 30px;
    flex: none;
}
.cutlabel {
    width: 343px;
    font-size: 11px;
    overflow: hidden;
    text-indent: -9px;
    flex: none;
}
.nextbtn {
    margin-left: 7px;
}
.pointcombo {
    width: 138px;
    height: 18px;
    flex: none;
    margin-left: 3px;
    padding-left: 2px;
    font-size: 11px;
}
.combo.pointcombo span {
    padding-bottom: 0;
}

.viewport {
    position: relative;
    flex: 1;
    margin-top: 0;
    background: #000;
    border-top: 1px solid #333;
}
.model {
    position: absolute;
    left: 0;
    top: -1px;
    width: 1200px;
    height: 616px;
}
.axis {
    font-family: "Liberation Sans", sans-serif;
    font-size: 13px;
}
.zc {
    fill: #2848d8;
}
.yc {
    fill: #38a050;
}
.xc {
    fill: #c04444;
}

.sketchbar {
    height: 34px;
    display: flex;
    background: #fff;
    border-bottom: 2px solid #c4c4c4;
}
.g-sketch {
    margin-left: 150px;
    border: 0;
    padding-right: 13px;
}
.g-sketch .ic {
    width: 26px;
    height: 26px;
    margin: 0 2.4px;
}
.g-sketch .grip {
    margin-left: 3px;
}
.g-sketch .flagbtn {
    background: #dcdcdc;
    margin-left: 1px;
}
.g-sketch .dd::after {
    top: 13px;
}
.sep.slim {
    margin: 0 3px;
}
.sep.slim.tail {
    margin-right: 0;
}
.finish {
    width: 49px;
    margin-left: 2px;
    font-size: 11px;
    color: #bbb;
    white-space: nowrap;
    flex: none;
}
.statusbar {
    height: 22px;
    background: #fff;
}
.taskbar {
    position: relative;
    height: 40px;
    display: flex;
    gap: 4px;
    border-top: 2px solid #27505f;
    background: linear-gradient(90deg, #3f8bbd 0%, #4f9fd0 40%, #5aa5d2 60%, #3f8cc0 100%);
}
.taskbar::before {
    content: "";
    position: absolute;
    left: 1058px;
    top: 0;
    width: 142px;
    height: 30px;
    background: repeating-linear-gradient(108deg, #10202a 0 16px, #2c5266 22px, #10202a 28px);
    -webkit-mask-image: linear-gradient(rgba(0,0,0,1) 40%, rgba(0,0,0,0));
}
.taskbtn {
    width: 58px;
    height: 38px;
    display: flex;
    align-items: center;
    justify-content: center;
    border: 1px solid #1f4c68;
    border-radius: 3px;
    background: linear-gradient(#9cc9e4, #4e92bf);
    flex: none;
}
.startbtn {
    width: 42px;
    justify-content: flex-start;
    overflow: hidden;
}
.tray {
    position: relative;
    margin-left: auto;
    display: flex;
    align-items: center;
    gap: 6px;
    flex: none;
}
.traygap {
    margin-left: 4px;
}
.traytext {
    font-family: "Liberation Sans", sans-serif;
    font-size: 11px;
    font-weight: bold;
    fill: #fff;
    text-anchor: middle;
}
.traytext.big {
    font-size: 16px;
}

.wm-logo {
    position: absolute;
    left: 925px;
    top: 752px;
    width: 100px;
    height: 100px;
    fill: #0d5aa0;
}
.wm-text {
    position: absolute;
    left: 1040px;
    top: 750px;
    width: 160px;
    overflow: hidden;
    white-space: nowrap;
}
.wm-phone {
    font-family: "Liberation Serif", serif;
    font-size: 21px;
    font-style: italic;
    font-weight: bold;
    color: #d81818;
    line-height: 26px;
    border-bottom: 2px solid #0d4a88;
    height: 28px;
}
.wm-name {
    font-family: "Noto Sans CJK SC", sans-serif;
    font-size: 26px;
    font-weight: bold;
    letter-spacing: 2px;
    line-height: 34px;
    margin-top: 2px;
    color: #0d5aa0;
}
.wm-url {
    font-family: "DejaVu Sans", sans-serif;
    font-size: 27px;
    font-weight: bold;
    line-height: 30px;
    margin-top: -1px;
    color: #0d5aa0;
}

.topnotch {
    position: absolute;
    left: 193px;
    top: 0;
    width: 60px;
    height: 10px;
    background: #4d5350;
    border-radius: 0 0 8px 8px;
    box-shadow: 0 1px 2px rgba(0,0,0,0.4);
}
.topnotch i {
    position: absolute;
    left: 5px;
    top: 4px;
    width: 7px;
    height: 2px;
    background: #4ce04c;
}

.dialog {
    position: absolute;
    left: 14px;
    top: 105px;
    width: 328px;
    height: 706px;
    background: #e4e6e4;
    border: 1px solid #bcc2bf;
    border-top: 0;
    padding: 0 5px;
}
.dlg-title {
    height: 24px;
    margin: 0 -6px 3px;
    display: flex;
    align-items: center;
    padding: 0 10px 0 8px;
    background: #5a8279;
    color: #fff;
}
.gear {
    width: 14px;
    height: 14px;
}
.dlg-name {
    margin-left: 9px;
    font-size: 13px;
    flex: 1;
}
.dlg-reset {
    width: 14px;
    height: 14px;
    margin-right: 7px;
}
.dlg-close {
    width: 12px;
    height: 12px;
}
.sec {
    margin-bottom: 4px;
    padding-bottom: 6px;
    background: #fff;
    border-bottom: 2px solid #d2d4d2;
}
.sec.tight {
    margin-bottom: 3px;
}
.sec.closed {
    height: 23px;
    margin-bottom: 4px;
    padding: 0;
}
.sec.closed .sec-h {
    height: 21px;
}
.sec-h {
    height: 26px;
    padding: 0 6px 2px 7px;
    display: flex;
    align-items: center;
    justify-content: space-between;
    font-size: 13.5px;
    color: #4f94ae;
}
.sec.closed .sec-h {
    padding-bottom: 0;
}
.chev {
    width: 12px;
    height: 8px;
    fill: none;
    stroke: #3f86a6;
    stroke-width: 2;
}
.chev.small {
    width: 10px;
    height: 7px;
    margin-right: -3px;
}
.sec-b {
    padding: 4px 9px 0;
}
.sec.first .sec-b {
    padding-top: 5px;
}
.sec-b label {
    padding-bottom: 4px;
}
.combo {
    position: relative;
    height: 26px;
    display: flex;
    align-items: center;
    padding-left: 6px;
    border: 1px solid #a8a8a8;
    background: #fff;
    font-size: 12px;
}
.combo span {
    flex: 1;
    padding-bottom: 4px;
}
.combo-ic {
    width: 10px;
    height: 18px;
    margin: 0 7px 0 1px;
    flex: none;
}
.combo-ic.wide {
    width: 16px;
    height: 20px;
    margin: 0 3px 0 0;
}
.arrow {
    display: block;
    width: 0;
    height: 0;
    margin-right: 5px;
    border: 4px solid transparent;
    border-top: 5px solid #222;
    border-bottom: 0;
    flex: none;
}
.pick {
    display: flex;
    align-items: center;
    padding-bottom: 1px;
}
.pickbar {
    width: 238px;
    height: 32px;
    display: flex;
    align-items: center;
    padding-left: 6px;
    background: #f5d061;
    flex: none;
}
.pickbar span {
    padding-bottom: 3px;
}
.star {
    margin-right: 6px;
    font-size: 20px;
    line-height: 14px;
    height: 13px;
    font-weight: normal;
    color: #d02010;
}
.pickbtn {
    display: flex;
    align-items: center;
    justify-content: center;
    flex: none;
}
.pickbtn.blue {
    width: 24px;
    height: 24px;
    margin-left: 2px;
    background: #87bbdd;
    border: 1px solid #6fa0c0;
}
.pickbtn.pale {
    width: 32px;
    height: 32px;
    margin-left: 2px;
    background: #f5e4ab;
    border: 1px solid #e6dcb0;
}
.formrow {
    display: flex;
    align-items: center;
    justify-content: space-between;
}
.combo.half {
    width: 141px;
    padding-left: 5px;
}
.selbar {
    width: 118px;
    height: 20px;
    display: flex;
    align-items: center;
    padding-left: 3px;
    margin-right: 6px;
    background: #3390ea;
    color: #fff;
    flex: none;
}
.combo.selected {
    padding-left: 2px;
}
.sizegroup {
    margin: 2px 9px 0;
    height: 199px;
    padding: 0 8px 0 8px;
    background: #eef2f2;
    border: 1px solid #ccd4d4;
}
.size-h {
    height: 20px;
    margin-bottom: 10px;
    display: flex;
    align-items: center;
    justify-content: space-between;
    font-size: 12.5px;
    color: #5c9cb4;
}
.size-h span {
    padding-bottom: 2px;
}
.size-row {
    height: 25px;
    margin-bottom: 2px;
    display: flex;
    align-items: center;
    justify-content: space-between;
}
.size-row label {
    padding-bottom: 4px;
}
.field {
    width: 141px;
    height: 25px;
    display: flex;
    align-items: center;
    padding-left: 5px;
    border: 1px solid #a8a8a8;
    background: #fff;
}
.val {
    width: 79px;
    padding-bottom: 4px;
    font-size: 12px;
    letter-spacing: 0.4px;
}
.unit {
    flex: 1;
    font-family: "Open Sans", sans-serif;
    font-size: 12.5px;
}
.field .arrow {
    margin-right: 4px;
}
.bodyrow {
    height: 32px;
    margin-top: 2px;
    padding: 0 9px 0 10px;
    display: flex;
    align-items: center;
}
.check {
    width: 14px;
    height: 12px;
    margin-top: 1px;
}
.bodylabel {
    flex: 1;
    margin-left: 5px;
    padding-bottom: 4px;
}
.bodybtn {
    width: 32px;
    height: 32px;
    display: flex;
    align-items: center;
    justify-content: center;
    border: 1px solid #a8a8a8;
    background: #fff;
}
.dlg-foot {
    margin-top: 8px;
    padding-right: 10px;
    display: flex;
    justify-content: flex-end;
    gap: 5px;
}
.btn {
    width: 54px;
    height: 25px;
    padding: 2px 0 0;
    font-family: inherit;
    font-size: 12px;
    color: #333;
    background: #cfd3d2;
    border: 1px solid #b4b8b7;
}
.btn.off {
    color: #a8a8a8;
    background: #dfe1df;
    border-color: #bfc2c0;
}
.cursor {
    position: absolute;
    left: 208px;
    top: 128px;
    width: 13px;
    height: 19px;
}
```
